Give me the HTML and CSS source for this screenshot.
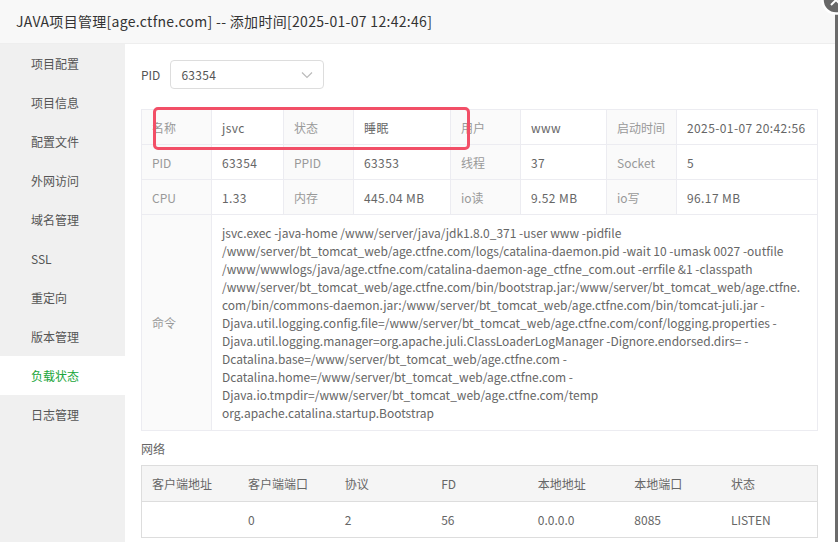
FILE: index.html
```html
<!DOCTYPE html>
<html>
<head>
<meta charset="utf-8">
<title>JAVA项目管理</title>
<link rel="stylesheet" href="styles.css">
</head>
<body>
<div class="layer">
 <div class="layer-title">JAVA项目管理[age.ctfne.com] -- 添加时间[2025-01-07 12:42:46]</div>
 <div class="layer-body">
  <ul class="tab-nav">
   <li>项目配置</li>
   <li>项目信息</li>
   <li>配置文件</li>
   <li>外网访问</li>
   <li>域名管理</li>
   <li>SSL</li>
   <li>重定向</li>
   <li>版本管理</li>
   <li class="on">负载状态</li>
   <li>日志管理</li>
  </ul>
  <div class="tab-con">
   <div class="pid-line">
    <span class="pid-label">PID</span>
    <div class="select">
     <span>63354</span>
     <svg width="12" height="8" viewBox="0 0 12 8"><path d="M1 1.5l5 5 5-5" fill="none" stroke="#bbb" stroke-width="1.2"/></svg>
    </div>
   </div>

   <div class="info-wrap">
    <table class="info">
     <colgroup>
      <col style="width:70px"><col style="width:72px"><col style="width:70px"><col style="width:97px">
      <col style="width:70px"><col style="width:86px"><col style="width:70px"><col>
     </colgroup>
     <tr>
      <th>名称</th><td>jsvc</td><th>状态</th><td>睡眠</td>
      <th>用户</th><td>www</td><th>启动时间</th><td>2025-01-07 20:42:56</td>
     </tr>
     <tr>
      <th>PID</th><td>63354</td><th>PPID</th><td>63353</td>
      <th>线程</th><td>37</td><th>Socket</th><td>5</td>
     </tr>
     <tr>
      <th>CPU</th><td>1.33</td><th>内存</th><td>445.04 MB</td>
      <th>io读</th><td>9.52 MB</td><th>io写</th><td>96.17 MB</td>
     </tr>
     <tr>
      <th>命令</th>
      <td colspan="7" class="cmd">jsvc.exec -java-home /www/server/java/jdk1.8.0_371 -user www -pidfile /www/server/bt_tomcat_web/age.ctfne.com/logs/catalina-daemon.pid -wait 10 -umask 0027 -outfile /www/wwwlogs/java/age.ctfne.com/catalina-daemon-age_ctfne_com.out -errfile &amp;1 -classpath /www/server/bt_tomcat_web/age.ctfne.com/bin/bootstrap.jar:/www/server/bt_tomcat_web/age.ctfne.com/bin/commons-daemon.jar:/www/server/bt_tomcat_web/age.ctfne.com/bin/tomcat-juli.jar -Djava.util.logging.config.file=/www/server/bt_tomcat_web/age.ctfne.com/conf/logging.properties -Djava.util.logging.manager=org.apache.juli.ClassLoaderLogManager -Dignore.endorsed.dirs= -Dcatalina.base=/www/server/bt_tomcat_web/age.ctfne.com -Dcatalina.home=/www/server/bt_tomcat_web/age.ctfne.com -Djava.io.tmpdir=/www/server/bt_tomcat_web/age.ctfne.com/temp org.apache.catalina.startup.Bootstrap</td>
     </tr>
    </table>
    <div class="mark"></div>
   </div>

   <div class="sub-title">网络</div>
   <table class="net">
    <tr>
     <th>客户端地址</th><th>客户端端口</th><th>协议</th><th>FD</th><th>本地地址</th><th>本地端口</th><th>状态</th>
    </tr>
    <tr>
     <td></td><td>0</td><td>2</td><td>56</td><td>0.0.0.0</td><td>8085</td><td>LISTEN</td>
    </tr>
   </table>
  </div>
 </div>
 <a class="layer-close"><svg width="30" height="30" viewBox="0 0 30 30"><circle cx="15" cy="15" r="13.5" fill="#686868" stroke="#fff" stroke-width="2.5"/><path d="M10 10l10 10M20 10l-10 10" stroke="#fff" stroke-width="2"/></svg></a>
</div>
</body>
</html>
```

FILE: styles.css
```css
html, body {
 margin:0;
 padding:0;
}
body {
 width:838px;
 height:542px;
 background:#6b6b6b;
 font-family:"Noto Sans CJK SC", "Noto Sans", sans-serif;
 font-size:12px;
 color:#666;
 overflow:hidden;
}
.layer {
 position:relative;
 width:835px;
 height:542px;
 background:#fff;
 display:flex;
 flex-direction:column;
}
.layer-title {
 height:43px;
 line-height:43px;
 padding-left:16px;
 font-size:14px;
 letter-spacing:0.3px;
 color:#333;
 background:#f8f8f8;
 border-bottom:1px solid #eee;
 white-space:nowrap;
}
.layer-close {
 position:absolute;
 top:-15px;
 right:-16px;
 width:30px;
 height:30px;
}
.layer-close svg {display:block;}
.layer-body {
 flex:1;
 display:flex;
 min-height:0;
}
.tab-nav {
 width:125px;
 margin:0;
 padding:0;
 list-style:none;
 background:#f0f0f0;
}
.tab-nav li {
 height:39px;
 line-height:39px;
 padding-left:31px;
 font-size:12px;
 color:#555;
}
.tab-nav li.on {
 background:#fff;
 color:#20a53a;
}
.tab-con {
 flex:1;
 padding:16px 17px 0 16px;
 min-width:0;
}
.pid-line {
 display:flex;
 align-items:center;
 gap:10px;
 height:29px;
}
.pid-label {color:#555;}
.select {
 width:132px;
 height:27px;
 border:1px solid #ddd;
 border-radius:4px;
 padding:0 10px;
 display:flex;
 align-items:center;
 justify-content:space-between;
 color:#555;
 letter-spacing:0.3px;
}
.info-wrap {
 position:relative;
 margin-top:20px;
}
table {
 width:100%;
 border-collapse:collapse;
 table-layout:fixed;
}
.info th, .info td {
 border:1px solid #ececf1;
 height:34px;
 padding:0 10px;
 text-align:left;
 font-weight:normal;
 white-space:nowrap;
}
.info th {
 background:#fafafa;
 color:#999;
}
.info td {
 color:#666;
 letter-spacing:0.4px;
}
.info td.cmd {
 white-space:normal;
 overflow-wrap:break-word;
 letter-spacing:0;
 line-height:18px;
 padding:9px 16px 8px 10px;
}
.mark {
 position:absolute;
 left:12px;
 top:-2px;
 width:311px;
 height:37px;
 border:3px solid #f24f67;
 border-radius:5px;
}
.sub-title {
 margin:9px 0 7px;
 line-height:18px;
 color:#666;
}
.net th, .net td {
 height:35px;
 padding:0 10px;
 text-align:left;
 font-weight:normal;
 color:#666;
}
.net {border:1px solid #ddd;}
.net th {
 background:#f5f5f5;
 border-bottom:1px solid #ddd;
}
```
